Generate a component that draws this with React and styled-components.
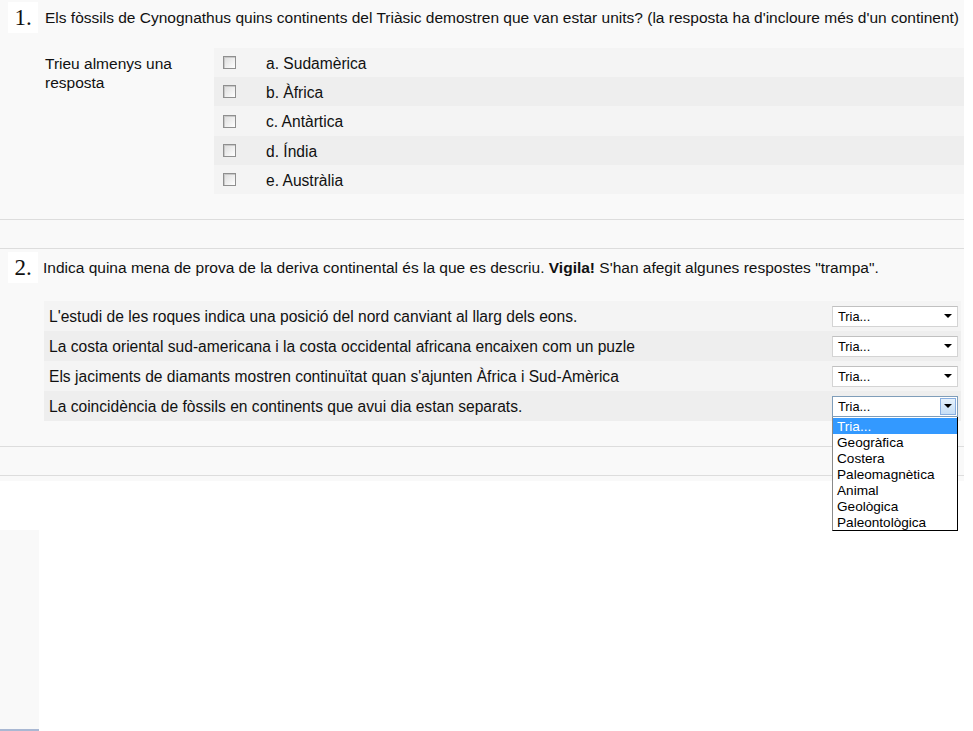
import React from "react";
import styled, { createGlobalStyle } from "styled-components";

const GlobalStyle = createGlobalStyle`
  body {
    margin: 0;
    background: #ffffff;
    font-family: "Liberation Sans", Arial, sans-serif;
    color: #111;
  }
`;

const Page = styled.div`
  width: 964px;
  background: #f9f9f9;
  padding-bottom: 5px;
`;

const Question = styled.div`
  padding-top: ${({ top }) => top}px;
  padding-bottom: 25px;
  border-bottom: 1px solid #dddddd;
`;

const Band = styled.div`
  height: ${({ h }) => h}px;
  border-bottom: 1px solid #dddddd;
`;

const Header = styled.div`
  display: flex;
  align-items: center;
  height: 31px;
`;

const Num = styled.div`
  width: 30px;
  height: 31px;
  margin-left: 8px;
  background: #ffffff;
  font-family: "Liberation Serif", "Times New Roman", serif;
  font-size: 23px;
  line-height: 31px;
  text-align: center;
`;

const Formulation = styled.div`
  margin-left: ${({ ml }) => ml}px;
  font-size: 15.5px;
  white-space: nowrap;
`;

const AnswerBlock = styled.div`
  display: flex;
  margin-top: ${({ gap }) => gap}px;
`;

const Prompt = styled.div`
  width: 214px;
  padding-left: 45px;
  padding-right: 30px;
  box-sizing: border-box;
  padding-top: 6px;
  font-size: 15.5px;
  line-height: 19px;
  flex-shrink: 0;
`;

const Answers = styled.div`
  flex: 1;
`;

const Row = styled.div`
  display: flex;
  align-items: center;
  height: ${({ h }) => h}px;
  box-sizing: border-box;
  background: ${({ alt }) => (alt ? "#eeeeee" : "#f4f4f4")};
  padding: 2px ${({ pr }) => pr || 0}px 0 ${({ pl }) => pl}px;
  font-size: 15.6px;
`;

const Check = styled.span`
  display: inline-block;
  width: 11px;
  height: 11px;
  margin-top: -2px;
  border: 1px solid #8f8f8f;
  background: linear-gradient(135deg, #dcdcdc 0%, #f4f4f4 70%, #ffffff 100%);
  box-shadow: inset 1px 1px 0 #c8c8c8;
  margin-right: 30px;
  flex-shrink: 0;
`;

const Label = styled.span`
  white-space: nowrap;
`;

const Subs = styled.div`
  padding-left: 44px;
  padding-right: 3px;
`;

const Stem = styled.span`
  flex: 1;
  white-space: nowrap;
`;

const SelectWrap = styled.div`
  position: relative;
  width: 126px;
  margin-top: -2px;
  flex-shrink: 0;
`;

const Select = styled.div`
  display: flex;
  align-items: center;
  height: 19px;
  background: #ffffff;
  border: 1px solid ${({ open }) => (open ? "#7f9db9" : "#d4d4d4")};
  border-top-color: ${({ open }) => (open ? "#7f9db9" : "#c0c0c0")};
  font-size: 12.8px;
  color: #000;
`;

const SelText = styled.span`
  flex: 1;
  padding-left: 5px;
`;

const ArrowBtn = styled.span`
  display: flex;
  align-items: center;
  justify-content: center;
  width: 16px;
  height: 17px;
  margin-right: 1px;
  background: ${({ open }) => (open ? "linear-gradient(#e6f1fb, #c6def6)" : "transparent")};
  border: 1px solid ${({ open }) => (open ? "#88aee0" : "transparent")};
  box-sizing: border-box;
`;

const Arrow = styled.span`
  width: 0;
  height: 0;
  border-left: 4px solid transparent;
  border-right: 4px solid transparent;
  border-top: 4px solid #000;
`;

const Dropdown = styled.div`
  position: absolute;
  top: 100%;
  left: 0;
  width: 126px;
  box-sizing: border-box;
  background: #ffffff;
  border: 1px solid #000;
  border-left-color: #8a8a8a;
  border-top: none;
  padding-top: 1px;
  z-index: 5;
`;

const Option = styled.div`
  height: 16px;
  line-height: 17px;
  padding-left: 4px;
  font-size: 13.6px;
  color: ${({ active }) => (active ? "#ffffff" : "#000")};
  background: ${({ active }) => (active ? "#3399ff" : "#ffffff")};
`;

const Side = styled.div`
  width: 39px;
  height: 199px;
  margin-top: 49px;
  background: #f9f9f9;
  border-bottom: 2px solid #a9b8d3;
`;

const continents = ["a. Sudamèrica", "b. Àfrica", "c. Antàrtica", "d. Índia", "e. Austràlia"];

const stems = [
  "L'estudi de les roques indica una posició del nord canviant al llarg dels eons.",
  "La costa oriental sud-americana i la costa occidental africana encaixen com un puzle",
  "Els jaciments de diamants mostren continuïtat quan s'ajunten Àfrica i Sud-Amèrica",
  "La coincidència de fòssils en continents que avui dia estan separats.",
];

const options = ["Tria...", "Geogràfica", "Costera", "Paleomagnètica", "Animal", "Geològica", "Paleontològica"];

const Choice = ({ open }) => (
  <SelectWrap>
    <Select open={open}>
      <SelText>Tria...</SelText>
      <ArrowBtn open={open}>
        <Arrow />
      </ArrowBtn>
    </Select>
    {open && (
      <Dropdown>
        {options.map((o, i) => (
          <Option key={o} active={i === 0}>
            {o}
          </Option>
        ))}
      </Dropdown>
    )}
  </SelectWrap>
);

export default function App() {
  return (
    <>
      <GlobalStyle />
      <Page>
        <Question top={2}>
          <Header>
            <Num>1.</Num>
            <Formulation ml={7}>
              Els fòssils de Cynognathus quins continents del Triàsic demostren que van estar units? (la
              resposta ha d'incloure més d'un continent)
            </Formulation>
          </Header>
          <AnswerBlock gap={15}>
            <Prompt>Trieu almenys una resposta</Prompt>
            <Answers>
              {continents.map((c, i) => (
                <Row key={c} h={i === 2 ? 30 : 29} alt={i % 2 === 1} pl={9}>
                  <Check />
                  <Label>{c}</Label>
                </Row>
              ))}
            </Answers>
          </AnswerBlock>
        </Question>
        <Band h={28} />
        <Question top={3}>
          <Header>
            <Num>2.</Num>
            <Formulation ml={5}>
              Indica quina mena de prova de la deriva continental és la que es descriu. <b>Vigila!</b> S'han
              afegit algunes respostes "trampa".
            </Formulation>
          </Header>
          <AnswerBlock gap={18}>
            <Answers>
              <Subs>
                {stems.map((s, i) => (
                  <Row key={s} h={30} alt={i % 2 === 1} pl={5} pr={3}>
                    <Stem>{s}</Stem>
                    <Choice open={i === 3} />
                  </Row>
                ))}
              </Subs>
            </Answers>
          </AnswerBlock>
        </Question>
        <Band h={28} />
      </Page>
      <Side />
    </>
  );
}
